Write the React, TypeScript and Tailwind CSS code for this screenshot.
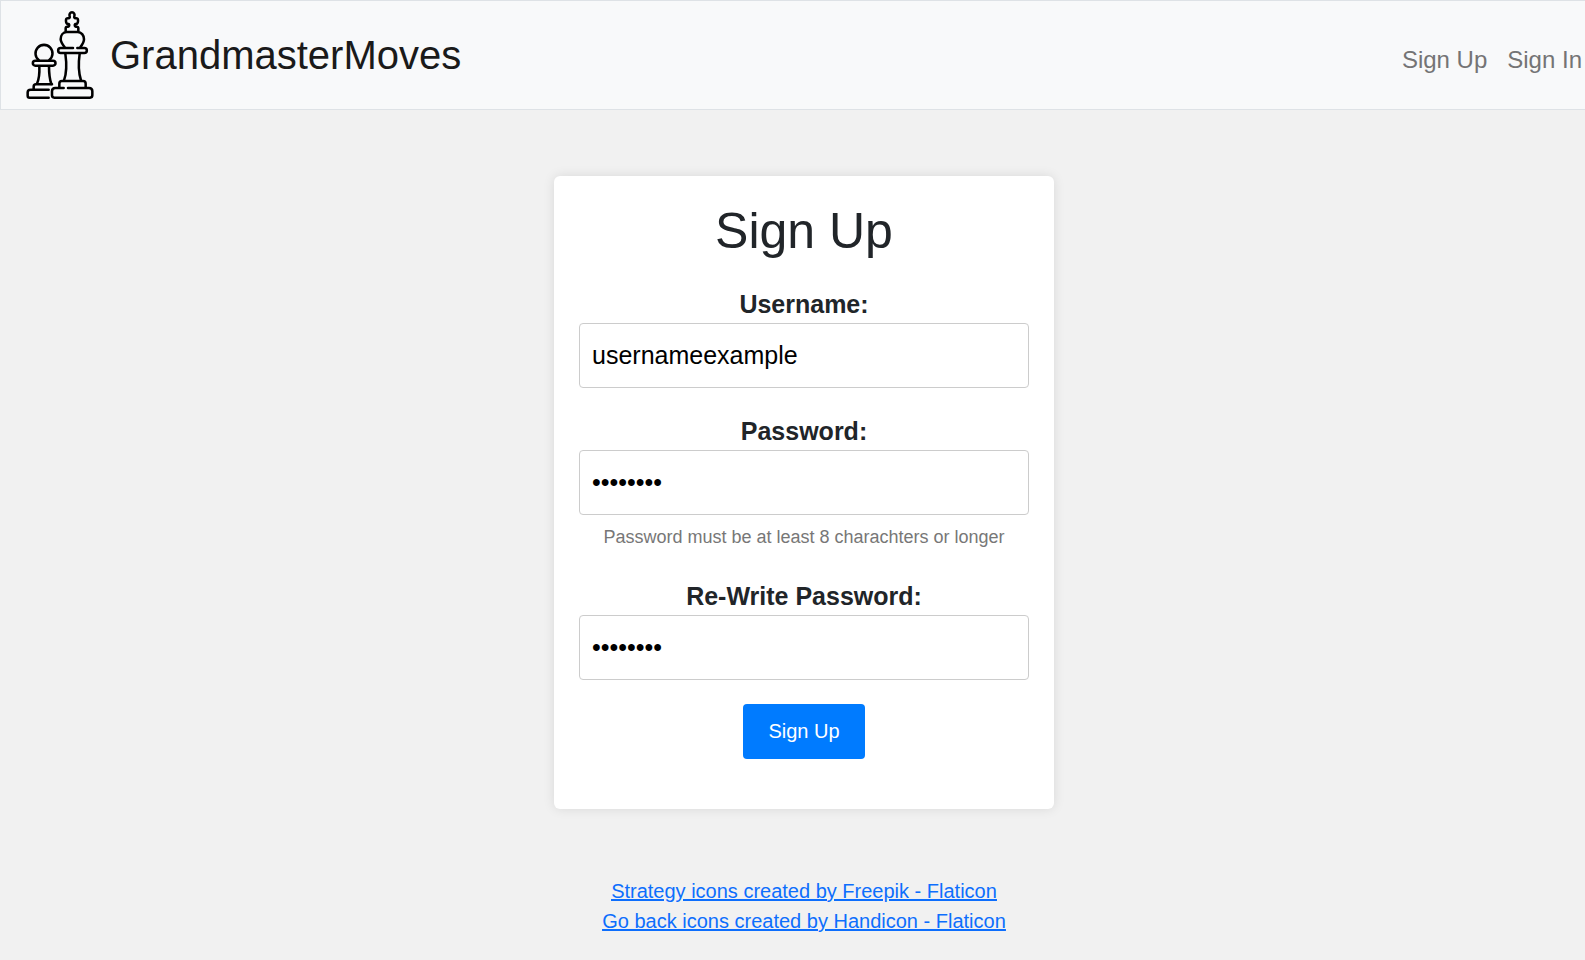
import { useState } from "react";

function ChessLogo() {
  return (
    <svg
      viewBox="78 30 204 270"
      className="h-[90px] w-[68px]"
      fill="none"
      stroke="#000"
      strokeWidth="7.6"
      strokeLinecap="round"
      strokeLinejoin="round"
      aria-hidden="true"
    >
      {/* pawn */}
      <path d="M116 180a25.500 25.500 0 1 1 32 0" />
      <path d="M106 182h53a7.500 7.500 0 0 1 0 15h-53a7.500 7.500 0 0 1 0-15z" />
      <path d="M118 199c1 20 0 36-7 52M147 199c0 20 1 36 7 53" />
      <path d="M156 253h-48c-5 0-7 3-7 7v8" />
      <path d="M146 269H92c-6 0-9 4-9 8v10c0 4 2 6 6 6h57" />
      {/* king */}
      <path d="M197 93v-8c0-3 2-5 5-5h2c4-1 5-5 2-8-4 1-8-2-8-8v-4c0-4 3-6 7-5 4 0 5-3 4-6-2-6 1-12 7-12s9 6 7 12c-1 3 0 6 4 6 4-1 7 1 7 5v4c0 6-4 9-8 8-3 3-2 7 2 8h2c3 0 5 2 5 5v8" />
      <path d="M194 142c-6-8-12-16-12-24 0-12 7-22 18-22h33c11 0 19 10 19 22 0 8-5 16-11 24" />
      <path d="M219 144h-37a7.500 7.500 0 0 0 0 15h71a7.500 7.500 0 0 0 0-15h-21" />
      <path d="M196 161c4 28 5 56-4 80M239 161c-4 28-4 56 4 80" />
      <path d="M178 262v-11c0-5 3-8 8-8h63c5 0 8 3 8 8v11" />
      <path d="M191 264h-25c-6 0-10 4-10 10v12c0 5 3 7 7 7h107c4 0 7-2 7-7v-12c0-6-4-10-10-10h-63" />
    </svg>
  );
}

type FieldProps = {
  id: string;
  label: string;
  type: string;
  value: string;
  onChange: (value: string) => void;
  hint?: string;
};

function Field({ id, label, type, value, onChange, hint }: FieldProps) {
  return (
    <div className="flex flex-col">
      <label htmlFor={id} className="text-center text-[25px] leading-[38px] font-bold">
        {label}
      </label>
      <input
        id={id}
        type={type}
        value={value}
        onChange={(e) => onChange(e.target.value)}
        aria-describedby={hint ? `${id}-hint` : undefined}
        className="h-[65px] w-full rounded-[4px] border border-[#ccc] bg-white px-3 text-[25px] text-black"
      />
      {hint && (
        <p id={`${id}-hint`} className="mt-1.5 text-center text-[18px] leading-8 text-[#777]">
          {hint}
        </p>
      )}
    </div>
  );
}

export default function App() {
  const [username, setUsername] = useState("usernameexample");
  const [password, setPassword] = useState("12345678");
  const [repeated, setRepeated] = useState("12345678");

  return (
    <div className="min-h-screen bg-[#f1f1f1] font-['Liberation_Sans',Arial,sans-serif] text-[#212529]">
      <nav className="flex items-center justify-between border border-r-0 border-[#dee2e6] bg-[#f8f9fa] py-[9px] pr-[3px] pl-[25px]">
        <a href="#" className="flex items-center gap-4 text-[40px] leading-[60px] text-[#1a1a1a]">
          <ChessLogo />
          GrandmasterMoves
        </a>
        <div className="flex gap-5 pt-2.5 text-2xl text-[#747475]">
          <a href="#signup">Sign Up</a>
          <a href="#signin">Sign In</a>
        </div>
      </nav>

      <main className="flex flex-col items-center pt-[66px] pl-[23px]">
        <form
          onSubmit={(e) => e.preventDefault()}
          className="flex w-full max-w-[500px] flex-col rounded-md bg-white px-[25px] pt-[25px] pb-[50px] shadow-[0_0_12px_rgba(0,0,0,0.1)]"
        >
          <h1 className="mb-6 text-center text-[50px] leading-[60px]">Sign Up</h1>
          <div className="flex flex-col gap-6">
            <Field id="username" label="Username:" type="text" value={username} onChange={setUsername} />
            <Field
              id="password"
              label="Password:"
              type="password"
              value={password}
              onChange={setPassword}
              hint="Password must be at least 8 charachters or longer"
            />
            <Field
              id="repeat-password"
              label="Re-Write Password:"
              type="password"
              value={repeated}
              onChange={setRepeated}
            />
            <button
              type="submit"
              className="self-center rounded-[4px] bg-[#007bff] px-[25px] py-3 text-xl leading-[31px] text-white"
            >
              Sign Up
            </button>
          </div>
        </form>

        <footer className="mt-[67px] flex flex-col items-center text-xl leading-[30px] text-[#0d6efd] underline">
          <a href="#strategy-icons">Strategy icons created by Freepik - Flaticon</a>
          <a href="#go-back-icons">Go back icons created by Handicon - Flaticon</a>
        </footer>
      </main>
    </div>
  );
}
